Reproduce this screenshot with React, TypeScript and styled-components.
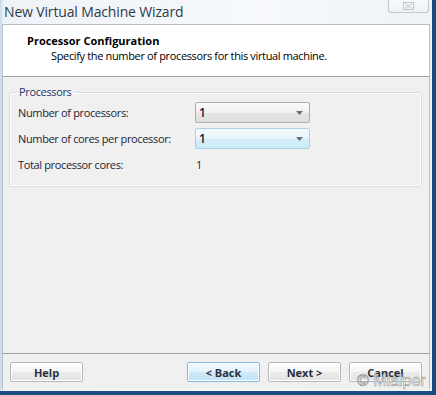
import styled, { createGlobalStyle } from 'styled-components';

const GlobalStyle = createGlobalStyle`
  html, body {
    margin: 0;
    padding: 0;
    background: #ffffff;
  }
  body {
    font-family: 'Open Sans', 'Liberation Sans', sans-serif;
  }
`;

const ComboArrow = () => (
  <svg width="7" height="4" viewBox="0 0 7 4">
    <path d="M0 0 H7 L3.5 4 Z" fill="#6d6d6d" />
  </svg>
);

const CloseGlyph = () => (
  <svg width="11" height="8" viewBox="0 0 11 8">
    <rect x="0.5" y="0.5" width="10" height="7" fill="none" stroke="#c4c8cc" />
    <path d="M2 1.5 L9 6.5 M9 1.5 L2 6.5" stroke="#c4c8cc" strokeWidth="1" />
  </svg>
);

export default function App() {
  return (
    <>
      <GlobalStyle />
      <Window>
        <TitleBar>
          <Title>New Virtual Machine Wizard</Title>
          <CloseButton>
            <CloseGlyph />
          </CloseButton>
        </TitleBar>
        <Client>
          <Header>
            <HeaderTitle>Processor Configuration</HeaderTitle>
            <HeaderText>Specify the number of processors for this virtual machine.</HeaderText>
          </Header>
          <Body>
            <GroupBox>
              <Legend>Processors</Legend>
              <FormGrid>
                <FieldLabel>Number of processors:</FieldLabel>
                <Combo>
                  <span>1</span>
                  <ComboArrow />
                </Combo>
                <FieldLabel>Number of cores per processor:</FieldLabel>
                <Combo focused>
                  <span>1</span>
                  <ComboArrow />
                </Combo>
                <FieldLabel>Total processor cores:</FieldLabel>
                <Value>1</Value>
              </FormGrid>
            </GroupBox>
          </Body>
          <Footer>
            <Button>Help</Button>
            <Spacer />
            <Button focused>&lt; Back</Button>
            <Button>Next &gt;</Button>
            <Button>Cancel</Button>
          </Footer>
        </Client>
        <Watermark>© Mialper</Watermark>
      </Window>
    </>
  );
}

const Window = styled.div`
  position: relative;
  width: 436px;
  height: 395px;
  box-sizing: border-box;
  padding: 0 6px 6px 2px;
  display: flex;
  flex-direction: column;
  background: linear-gradient(90deg, #c9d9e8 0px, #eef3f8 4px, #f7f9fb 60%, #eef3f8 100%);
  box-shadow: inset -4px 0 0 #1b4a7a, inset 0 -4px 0 #1d4f82;
  overflow: hidden;
`;

const TitleBar = styled.div`
  height: 24px;
  display: flex;
  align-items: flex-start;
  justify-content: space-between;
  flex-shrink: 0;
`;

const Title = styled.div`
  font-family: 'Open Sans', 'Liberation Sans', sans-serif;
  font-size: 14px;
  line-height: 26px;
  letter-spacing: -0.15px;
  color: #2e3b4a;
  padding-left: 2px;
  margin-top: -1px;
`;

const CloseButton = styled.div`
  width: 41px;
  height: 13px;
  margin-right: 1px;
  box-sizing: border-box;
  border: 1px solid #c3c6ca;
  border-top: none;
  border-radius: 0 0 3px 3px;
  background: linear-gradient(#f8f9fa, #eef0f2);
  display: flex;
  align-items: center;
  justify-content: center;
`;

const Client = styled.div`
  flex: 1;
  display: flex;
  flex-direction: column;
  border: 1px solid #b9bcc0;
  border-bottom: none;
  background: #f0f0f0;
`;

const Header = styled.div`
  height: 52px;
  box-sizing: border-box;
  background: #ffffff;
  border-bottom: 1px solid #a0a0a0;
  padding: 8px 0 0 24px;
  font-size: 11px;
  color: #000000;
`;

const HeaderTitle = styled.div`
  font-weight: 700;
  line-height: 15px;
`;

const HeaderText = styled.div`
  padding-left: 24px;
  line-height: 15px;
  letter-spacing: -0.35px;
`;

const Body = styled.div`
  flex: 1;
  padding: 8px 7px 0 6px;
`;

const GroupBox = styled.fieldset`
  margin: 0;
  padding: 0 8px 11px 8px;
  border: 1px solid #d5dfe5;
  border-radius: 2px;
  box-shadow: 0 0 0 1px #ffffff inset;
`;

const Legend = styled.legend`
  padding: 0 2px;
  margin-left: -1px;
  font-size: 11px;
  line-height: 14px;
  letter-spacing: -0.35px;
  color: #1f3366;
`;

const FormGrid = styled.div`
  display: grid;
  grid-template-columns: 177px 115px;
  grid-auto-rows: 21px;
  row-gap: 5px;
  align-items: center;
  margin-top: 3px;
  font-size: 11px;
  letter-spacing: -0.35px;
  color: #1e2433;
`;

const FieldLabel = styled.div`
  line-height: 14px;
`;

const Value = styled.div`
  line-height: 14px;
  padding-left: 1px;
`;

const Combo = styled.div<{ focused?: boolean }>`
  height: 21px;
  box-sizing: border-box;
  display: flex;
  align-items: center;
  justify-content: space-between;
  padding: 0 6px 0 3px;
  border: 1px solid ${(p) => (p.focused ? '#a9d1e6' : '#aeaeae')};
  border-radius: 2px;
  background: ${(p) =>
    p.focused
      ? 'linear-gradient(#f3fafd 0%, #e8f6fc 50%, #d4eef9 51%, #cdebf8 100%)'
      : 'linear-gradient(#fbfbfb 0%, #f1f1f1 50%, #e6e6e6 51%, #dedede 100%)'};
  font-size: 12px;
  font-weight: 600;
  color: #1a1a2e;
`;

const Footer = styled.div`
  height: 36px;
  box-sizing: border-box;
  border-top: 1px solid #a0a0a0;
  padding: 8px 7px 0 7px;
  display: flex;
  align-items: flex-start;
  gap: 8px;
`;

const Spacer = styled.div`
  flex: 1;
`;

const Button = styled.div<{ focused?: boolean }>`
  width: 73px;
  height: 20px;
  box-sizing: border-box;
  display: flex;
  align-items: center;
  justify-content: center;
  border: 1px solid ${(p) => (p.focused ? '#7fbde0' : '#b6b6b6')};
  border-radius: 2px;
  box-shadow: inset 0 0 0 1px #ffffff;
  background: ${(p) =>
    p.focused
      ? 'linear-gradient(#f0f8fd 0%, #e3f2fb 50%, #cfe9f7 51%, #c2e3f5 100%)'
      : 'linear-gradient(#fdfdfd 0%, #f4f4f4 50%, #ebebeb 51%, #e3e3e3 100%)'};
  font-size: 11px;
  font-weight: 700;
  color: #2b2f3d;
`;

const Watermark = styled.div`
  position: absolute;
  left: 357px;
  top: 371px;
  font-family: 'Liberation Sans', sans-serif;
  font-size: 16px;
  line-height: 20px;
  color: rgba(255, 255, 255, 0.8);
  -webkit-text-stroke: 0.5px #8a8a8a;
  pointer-events: none;
`;
